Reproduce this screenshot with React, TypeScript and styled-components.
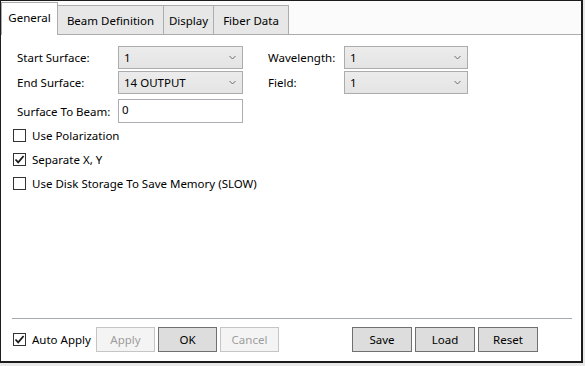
import { createGlobalStyle } from "styled-components";
import styled from "styled-components";

const GlobalStyle = createGlobalStyle`
    html, body {
        margin: 0;
        padding: 0;
        background: #e9e9e9;
    }
    body {
        font-family: "Noto Sans", "Liberation Sans", sans-serif;
        font-size: 11.5px;
        color: #000;
    }
`;

const TABS = [
    { label: "General", width: 57 },
    { label: "Beam Definition", width: 107 },
    { label: "Display", width: 51 },
    { label: "Fiber Data", width: 76 },
];

const Chevron = () => (
    <svg width="7" height="5" viewBox="0 0 7 5">
        <path d="M0.5 1 L3.5 4 L6.5 1" fill="none" stroke="#6d6d6d" strokeWidth="1" />
    </svg>
);

const Check = ({ checked }: { checked?: boolean }) => (
    <CheckBox>
        {checked && (
            <svg width="11" height="11" viewBox="0 0 11 11">
                <path d="M1.5 5.5 L4.2 8.3 L9.6 2" fill="none" stroke="#1b1b1b" strokeWidth="1.8" />
            </svg>
        )}
    </CheckBox>
);

function Combo({ value }: { value: string }) {
    return (
        <Select>
            <span>{value}</span>
            <Chevron />
        </Select>
    );
}

export default function App() {
    return (
        <>
            <GlobalStyle />
            <Window>
                <TabStrip>
                    {TABS.map((t, i) => (
                        <Tab key={t.label} $active={i === 0} $width={t.width}>
                            {t.label}
                        </Tab>
                    ))}
                </TabStrip>

                <Panel>
                    <FormGrid>
                        <Label>Start Surface:</Label>
                        <Combo value="1" />
                        <span />
                        <Label>Wavelength:</Label>
                        <Combo value="1" />

                        <Label>End Surface:</Label>
                        <Combo value="14 OUTPUT" />
                        <span />
                        <Label>Field:</Label>
                        <Combo value="1" />

                        <Label $end>Surface To Beam:</Label>
                        <TextInput>0</TextInput>
                    </FormGrid>

                    <CheckList>
                        <CheckRow>
                            <Check />
                            Use Polarization
                        </CheckRow>
                        <CheckRow>
                            <Check checked />
                            Separate X, Y
                        </CheckRow>
                        <CheckRow>
                            <Check />
                            Use Disk Storage To Save Memory (SLOW)
                        </CheckRow>
                    </CheckList>

                    <Footer>
                        <ButtonBar>
                            <AutoApply>
                                <Check checked />
                                Auto Apply
                            </AutoApply>
                            <ButtonGroup>
                                <Button disabled $w={59}>Apply</Button>
                                <Button $w={59}>OK</Button>
                                <Button disabled $w={59}>Cancel</Button>
                            </ButtonGroup>
                            <ButtonGroup $right>
                                <Button>Save</Button>
                                <Button>Load</Button>
                                <Button>Reset</Button>
                            </ButtonGroup>
                        </ButtonBar>
                    </Footer>
                </Panel>
            </Window>
        </>
    );
}

const Window = styled.div`
    width: 583px;
    height: 363px;
    box-sizing: border-box;
    border: 1px solid #1c1c1c;
    border-right-width: 2px;
    border-bottom-width: 2px;
    background: #fff;
    display: flex;
    flex-direction: column;
`;

const TabStrip = styled.div`
    height: 34px;
    box-sizing: border-box;
    border-bottom: 1px solid #acacac;
    background: #fbfbfb;
    display: flex;
    align-items: flex-end;
`;

const Tab = styled.div<{ $active?: boolean; $width: number }>`
    width: ${(p) => p.$width}px;
    height: ${(p) => (p.$active ? 33 : 29)}px;
    margin-bottom: ${(p) => (p.$active ? -1 : 0)}px;
    margin-left: -1px;
    &:first-child {
        margin-left: 0;
    }
    box-sizing: border-box;
    border: 1px solid #acacac;
    border-bottom: none;
    background: ${(p) => (p.$active ? "#fff" : "#e7e7e7")};
    position: relative;
    z-index: ${(p) => (p.$active ? 2 : 1)};
    display: flex;
    align-items: center;
    justify-content: center;
    padding-bottom: ${(p) => (p.$active ? 3 : 0)}px;
    white-space: nowrap;
`;

const Panel = styled.div`
    flex: 1;
    display: flex;
    flex-direction: column;
    padding-top: 11px;
`;

const FormGrid = styled.div`
    display: grid;
    grid-template-columns: 101px 125px 25px 76px 124px;
    grid-template-rows: 23px 23px 27px;
    row-gap: 2px;
    padding-left: 16px;
    align-items: center;
`;

const Label = styled.div<{ $end?: boolean }>`
    white-space: nowrap;
    align-self: ${(p) => (p.$end ? "end" : "center")};
    line-height: 23px;
`;

const Select = styled.div`
    height: 23px;
    box-sizing: border-box;
    border: 1px solid #acacac;
    background: linear-gradient(#ececec, #e4e4e4);
    display: flex;
    align-items: center;
    justify-content: space-between;
    padding: 0 6px 0 5px;
`;

const TextInput = styled.div`
    align-self: end;
    height: 24px;
    box-sizing: border-box;
    border: 1px solid #abadb3;
    background: #fff;
    padding: 1px 3px;
    line-height: 18px;
`;

const CheckList = styled.div`
    display: flex;
    flex-direction: column;
    gap: 1px;
    padding-left: 12px;
    margin-top: 1px;
`;

const CheckRow = styled.div`
    height: 23px;
    display: flex;
    align-items: center;
    gap: 6px;
    white-space: nowrap;
`;

const CheckBox = styled.span`
    width: 13px;
    height: 13px;
    box-sizing: border-box;
    border: 1px solid #333;
    background: #fff;
    display: inline-flex;
    align-items: center;
    justify-content: center;
    flex-shrink: 0;
`;

const Footer = styled.div`
    margin-top: auto;
    margin-left: 11px;
    margin-right: 9px;
    border-top: 1px solid #a3acb5;
    padding-top: 8px;
    padding-bottom: 9px;
`;

const ButtonBar = styled.div`
    display: flex;
    align-items: center;
    padding-left: 1px;
    padding-right: 34px;
`;

const AutoApply = styled.div`
    width: 83px;
    display: flex;
    align-items: center;
    gap: 6px;
    white-space: nowrap;
`;

const ButtonGroup = styled.div<{ $right?: boolean }>`
    display: flex;
    gap: 3px;
    margin-left: ${(p) => (p.$right ? "auto" : "0")};
`;

const Button = styled.button<{ $w?: number }>`
    width: ${(p) => p.$w ?? 60}px;
    height: 25px;
    box-sizing: border-box;
    font: inherit;
    color: #000;
    background: #dddddd;
    border: 1px solid #707070;
    padding: 0;
    &:disabled {
        color: #9d9d9d;
        background: #f4f4f4;
        border-color: #c5c5c5;
    }
`;
